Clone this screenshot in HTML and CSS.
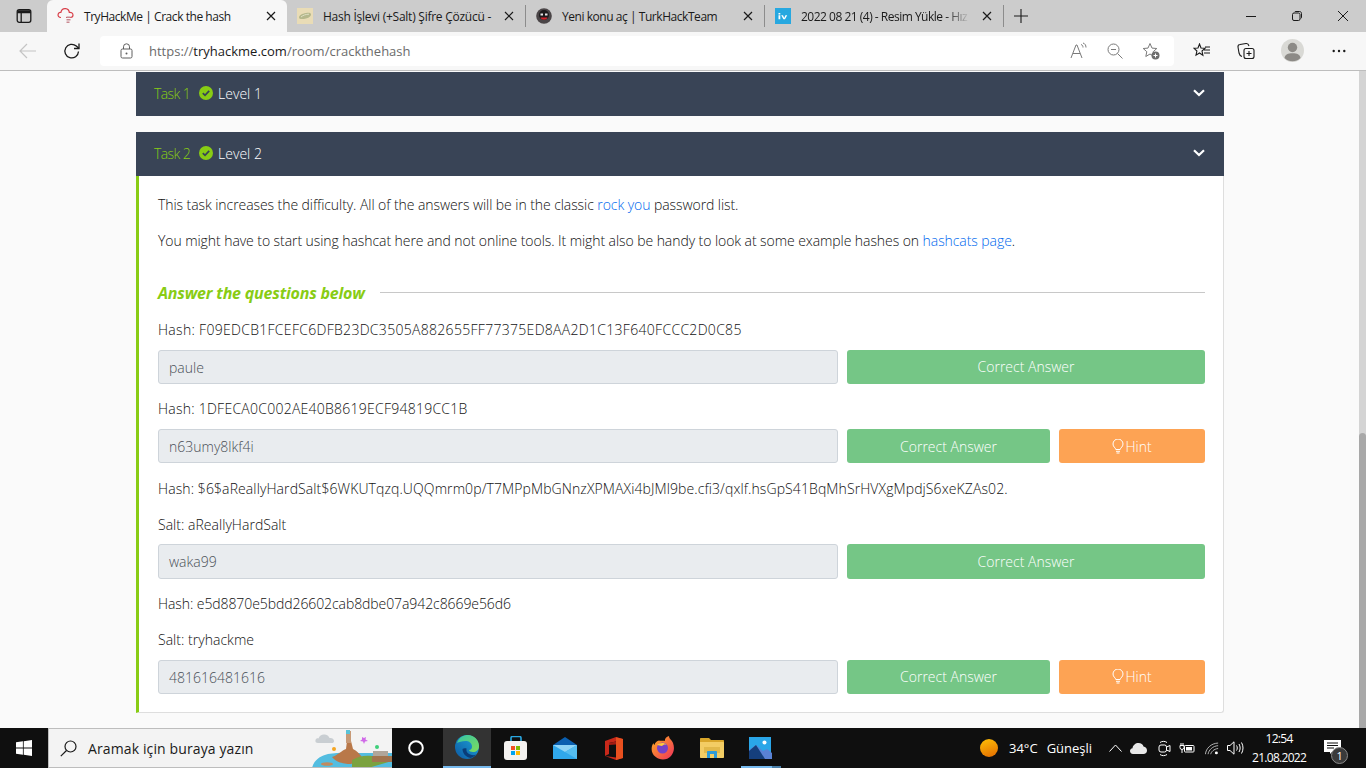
FILE: index.html
```html
<!DOCTYPE html>
<html lang="tr">
<head>
<meta charset="utf-8">
<title>TryHackMe | Crack the hash</title>
<link rel="stylesheet" href="styles.css">
</head>
<body>
<div class="screen">
  <header class="tabbar">
    <div class="tab-toggle">
      <svg width="16" height="16" viewBox="0 0 16 16" fill="none" stroke="#1a1a1a" stroke-width="1.3"><rect x="1.2" y="1.7" width="13.6" height="12.6" rx="2"/><path d="M1.2 4.6h13.6M5.2 4.6v9.7" /><path d="M1.6 2.2h12.8v2.2H1.6z" fill="#1a1a1a" stroke="none"/></svg>
    </div>
    <div class="tab tab-active">
      <svg class="favicon" width="18" height="18" viewBox="0 0 18 18" fill="none"><path d="M4 10.5C1.6 10.5.6 8.6 1.2 7c.5-1.3 1.7-1.8 2.7-1.6C4.500 3 6.400 1.400 8.600 1.700c2.200.3 3.500 1.900 3.700 3.700 1.500-.3 3.700.6 3.700 2.700 0 1.400-1 2.400-2.400 2.400H9" stroke="#d8404a" stroke-width="1.200"/><path d="M9.500 9.500h4v1.500h-4zM9.500 12h4v1.500h-4zM9.500 14.500h3V16h-3z" fill="#c98a92"/></svg>
      <span class="tab-title">TryHackMe | Crack the hash</span>
      <svg class="tab-close" width="10" height="10" viewBox="0 0 10 10" stroke="#1a1a1a" stroke-width="1.200"><path d="M1 1l8 8M9 1l-8 8"/></svg>
    </div>
    <div class="tab">
      <svg class="favicon" width="16" height="16" viewBox="0 0 16 16"><rect width="16" height="16" fill="#e9dcb6"/><path d="M2 9.500c0-2 3-4 7-4.500 2-.3 4.500-.5 5 1 .5 1.800-1.500 3.500-5 4.500-3 .8-7 1-7-1z" fill="#b5b88c"/><path d="M4 9c2-1.800 5-2.800 8-2.800" stroke="#dfe0c4" fill="none"/></svg>
      <span class="tab-title tab-title-wide">Hash İşlevi (+Salt) Şifre Çözücü -</span>
      <svg class="tab-close" width="10" height="10" viewBox="0 0 10 10" stroke="#1a1a1a" stroke-width="1.200"><path d="M1 1l8 8M9 1l-8 8"/></svg>
    </div>
    <div class="tab tab-sep">
      <svg class="favicon" width="16" height="16" viewBox="0 0 16 16"><circle cx="8" cy="8" r="7.800" fill="#4a4547"/><circle cx="8" cy="7" r="5" fill="#1d1b1c"/><path d="M4.500 5.500h2.500v2H4.500zM9 5.500h2.500v2H9z" fill="#e6e6e6"/><path d="M4.500 9.500c1 3 6 3 7 0z" fill="#d2232a"/></svg>
      <span class="tab-title">Yeni konu aç | TurkHackTeam</span>
      <svg class="tab-close" width="10" height="10" viewBox="0 0 10 10" stroke="#1a1a1a" stroke-width="1.200"><path d="M1 1l8 8M9 1l-8 8"/></svg>
    </div>
    <div class="tab tab-sep tab-last">
      <svg class="favicon" width="16" height="16" viewBox="0 0 16 16"><rect width="16" height="16" fill="#27a8e0"/><path d="M3.500 5h1.800v1.500H3.500zM3.500 7.300h1.800v4H3.500zM6.200 7.300h1.800l1.200 2.600 1.200-2.600h1.800l-2.200 4H8.400z" fill="#fff"/></svg>
      <span class="tab-title tab-fade">2022 08 21 (4) - Resim Yükle - Hız</span>
      <svg class="tab-close" width="10" height="10" viewBox="0 0 10 10" stroke="#1a1a1a" stroke-width="1.200"><path d="M1 1l8 8M9 1l-8 8"/></svg>
    </div>
    <div class="tab-new">
      <svg width="14" height="14" viewBox="0 0 14 14" stroke="#1a1a1a" stroke-width="1.100"><path d="M7 0v14M0 7h14"/></svg>
    </div>
    <div class="window-controls">
      <div class="win-btn"><svg width="10" height="10" viewBox="0 0 10 10" stroke="#1a1a1a"><path d="M0 5.500h10"/></svg></div>
      <div class="win-btn"><svg width="10" height="10" viewBox="0 0 10 10" fill="none" stroke="#1a1a1a"><rect x=".5" y="2" width="7.500" height="7.500" rx="1.500"/><path d="M2.500 1.200 3.200.5h4.300c1.200 0 2 .8 2 2v4.300l-.7.700"/></svg></div>
      <div class="win-btn"><svg width="10" height="10" viewBox="0 0 10 10" stroke="#1a1a1a"><path d="M0 0l10 10M10 0L0 10"/></svg></div>
    </div>
  </header>

  <nav class="toolbar">
    <div class="nav-btn nav-back"><svg width="18" height="16" viewBox="0 0 18 16" fill="none" stroke="#c4c4c4" stroke-width="1.200"><path d="M1 8h16M8 1 1 8l7 7"/></svg></div>
    <div class="nav-btn nav-reload"><svg width="18" height="18" viewBox="0 0 18 18" fill="none" stroke="#1a1a1a" stroke-width="1.300"><path d="M15.500 9.500a6.800 6.800 0 1 1-2.200-5.400L16 6.500"/><path d="M16 1.500v5h-5"/></svg></div>
    <div class="address">
      <svg class="lock" width="13" height="16" viewBox="0 0 13 16" fill="none" stroke="#5f5f5f"><rect x="1" y="6" width="11" height="9" rx="1.500"/><path d="M3.500 6V3.800a3 3 0 0 1 6 0V6"/><circle cx="6.500" cy="10.500" r="1" fill="#5f5f5f" stroke="none"/></svg>
      <span class="url">https://<b class="url-host">tryhackme.com</b>/room/crackthehash</span>
      <div class="address-icons">
        <svg width="18" height="18" viewBox="0 0 18 18" fill="none" stroke="#7a7a7a"><path d="M1 16 6 3h1l5 13M3 11.500h7"/><path d="M11 2.500c1.500.5 2 1.500 2 3M13 1c2 .6 3 2.300 3 4.500"/></svg>
        <svg width="16" height="16" viewBox="0 0 16 16" fill="none" stroke="#7a7a7a"><circle cx="6.500" cy="6.500" r="5.500"/><path d="M4 6.500h5M10.500 10.500l5 5"/></svg>
        <svg width="18" height="18" viewBox="0 0 18 18" fill="none"><path d="M8 1.500l2 4.600 4.800.4-3.600 3.200 1 4.800L8 12l-4.200 2.500 1-4.800L1.200 6.500 6 6.100z" stroke="#7a7a7a"/><circle cx="13.500" cy="13.500" r="4" fill="#6e6e6e"/><path d="M13.500 11.500v4M11.500 13.500h4" stroke="#fff"/></svg>
      </div>
    </div>
    <div class="tool-icons">
      <svg class="ti-fav" width="18" height="16" viewBox="0 0 18 16" fill="none" stroke="#1a1a1a" stroke-width="1.100"><path d="M6.500 1 8 5l4 .3-3 2.700.9 4.200L6.500 10l-3.500 2.200.9-4.200L1 5.300 5 5zM11 7h6M11 10h6M12 4h5"/></svg>
      <svg class="ti-col" width="18" height="18" viewBox="0 0 18 18" fill="none" stroke="#1a1a1a" stroke-width="1.100"><rect x="7" y="6.500" width="10" height="10" rx="2"/><path d="M12 9v5M9.500 11.500h5M5 14.500C3 14 2.500 13 2 11L1 5c-.2-1.500.5-2.300 2-2.500L9 1.500c1.500-.2 2.500.5 3 2.500"/></svg>
      <svg class="ti-avatar" width="23" height="23" viewBox="0 0 23 23"><circle cx="11.500" cy="11.500" r="11.500" fill="#d9d9d5"/><circle cx="11.500" cy="8.500" r="4.700" fill="#8c8a86"/><path d="M3.500 19c.5-3.500 3.500-4.800 8-4.800s7.500 1.300 8 4.800a11.500 11.500 0 0 1-16 0z" fill="#8c8a86"/></svg>
      <svg class="ti-more" width="14" height="4" viewBox="0 0 14 4" fill="#1a1a1a"><circle cx="1.700" cy="2" r="1.200"/><circle cx="7" cy="2" r="1.200"/><circle cx="12.300" cy="2" r="1.200"/></svg>
    </div>
  </nav>

  <div class="viewport">
    <main class="page">
      <section class="task task-first">
        <div class="task-head">
          <span class="task-no">Task 1</span>
          <svg class="check" width="14" height="14" viewBox="0 0 14 14"><circle cx="7" cy="7" r="7" fill="#88cc14"/><path d="M3.800 7.200 6 9.300l4.200-4.400" fill="none" stroke="#394456" stroke-width="1.800"/></svg>
          <span class="task-name">Level 1</span>
          <svg class="chev" width="12" height="8" viewBox="0 0 12 8" fill="none" stroke="#fff" stroke-width="2.200"><path d="M1 1.200 6 6l5-4.800"/></svg>
        </div>
      </section>
      <section class="task">
        <div class="task-head">
          <span class="task-no">Task 2</span>
          <svg class="check" width="14" height="14" viewBox="0 0 14 14"><circle cx="7" cy="7" r="7" fill="#88cc14"/><path d="M3.800 7.200 6 9.300l4.200-4.400" fill="none" stroke="#394456" stroke-width="1.800"/></svg>
          <span class="task-name">Level 2</span>
          <svg class="chev" width="12" height="8" viewBox="0 0 12 8" fill="none" stroke="#fff" stroke-width="2.200"><path d="M1 1.200 6 6l5-4.800"/></svg>
        </div>
        <div class="task-body">
          <p class="line">This task increases the difficulty. All of the answers will be in the classic <a href="#">rock you</a> password list.</p>
          <p class="line">You might have to start using hashcat here and not online tools. It might also be handy to look at some example hashes on <a href="#">hashcats page</a>.</p>
          <div class="answer-title"><h3>Answer the questions below</h3><span class="rule"></span></div>

          <p class="line q-end hash-sha">Hash: F09EDCB1FCEFC6DFB23DC3505A882655FF77375ED8AA2D1C13F640FCCC2D0C85</p>
          <div class="answer-row">
            <div class="field">paule</div>
            <div class="btn btn-ok">Correct Answer</div>
          </div>

          <p class="line q-end hash-md">Hash: 1DFECA0C002AE40B8619ECF94819CC1B</p>
          <div class="answer-row">
            <div class="field">n63umy8lkf4i</div>
            <div class="btn btn-ok">Correct Answer</div>
            <div class="btn btn-hint"><svg width="12" height="15" viewBox="0 0 12 15" fill="none" stroke="#fff"><path d="M3.800 10.500C3.500 8.500 1 8 1 5a5 5 0 0 1 10 0c0 3-2.500 3.500-2.800 5.500z"/><path d="M4 12.300h4M4.500 14h3"/></svg>Hint</div>
          </div>

          <p class="line hash-crypt">Hash: $6$aReallyHardSalt$6WKUTqzq.UQQmrm0p/T7MPpMbGNnzXPMAXi4bJMl9be.cfi3/qxlf.hsGpS41BqMhSrHVXgMpdjS6xeKZAs02.</p>
          <p class="line q-end hash-salt">Salt: aReallyHardSalt</p>
          <div class="answer-row">
            <div class="field">waka99</div>
            <div class="btn btn-ok">Correct Answer</div>
          </div>

          <p class="line hash-lower">Hash: e5d8870e5bdd26602cab8dbe07a942c8669e56d6</p>
          <p class="line q-end hash-salt">Salt: tryhackme</p>
          <div class="answer-row">
            <div class="field">481616481616</div>
            <div class="btn btn-ok">Correct Answer</div>
            <div class="btn btn-hint"><svg width="12" height="15" viewBox="0 0 12 15" fill="none" stroke="#fff"><path d="M3.800 10.500C3.500 8.500 1 8 1 5a5 5 0 0 1 10 0c0 3-2.500 3.500-2.800 5.500z"/><path d="M4 12.300h4M4.500 14h3"/></svg>Hint</div>
          </div>
        </div>
      </section>
    </main>
    <div class="scrollbar"><div class="thumb"></div></div>
  </div>

  <footer class="taskbar">
    <div class="start"><svg width="16" height="16" viewBox="0 0 16 16" fill="#fff"><path d="M0 2.300 6.900 1.300v6.300H0zM7.700 1.200 16 0v7.600H7.700zM0 8.400h6.900v6.300L0 13.700zM7.700 8.400H16V16l-8.300-1.200z"/></svg></div>
    <div class="search">
      <svg class="search-glass" width="17" height="17" viewBox="0 0 17 17" fill="none" stroke="#1a1a1a" stroke-width="1.200"><circle cx="10.500" cy="6.500" r="5.500"/><path d="M6.500 10.500.8 16.200"/></svg>
      <span class="search-text">Aramak için buraya yazın</span>
      <svg class="search-art" width="80" height="39" viewBox="0 0 80 39">
        <path d="M6 14c-2 0-3-1-2.500-3 .4-1.500 2-2 3-1.500C7.500 6.500 10 5 13 5.500c2.500.4 4 2 4.500 3.500 2-.5 4.500.5 4.500 3 0 1.500-1 2-2 2z" fill="#c9ced2"/>
        <circle cx="22" cy="20" r="2" fill="#f5a623"/><path d="M50 8l2 1 2-1-.5 2.500L56 12l-3 .5L52 15l-1-2.500-3-.5 2-1.500z" fill="#d06ae8"/><circle cx="65" cy="18" r="2" fill="#3ed07a"/>
        <path d="M0 39c2-8 8-12 16-14 10-2 30-1 40-1h24v15z" fill="#53bde0"/>
        <path d="M20 28c6-2 9-6 14-8l1-8h4l2 8c4 2 8 6 10 10l-12 5c-8 0-15-2-19-7z" fill="#b97849"/>
        <rect x="34" y="2" width="5" height="12" fill="#c79a77"/><rect x="34" y="1" width="4" height="4" fill="#5ac3d8"/>
        <path d="M40 31c6-4 14-5 20-4l20 1v4l-24 7H40z" fill="#7ba23f"/>
        <rect x="61" y="22" width="15" height="5" fill="#b0a69a"/><path d="M60 27h20v6H60z" fill="#a1744e"/>
        <ellipse cx="15" cy="35" rx="6" ry="1.800" fill="#c28a5e"/>
      </svg>
    </div>
    <div class="cortana"><svg width="16" height="16" viewBox="0 0 16 16" fill="none" stroke="#fff" stroke-width="2"><circle cx="8" cy="8" r="6.800"/></svg></div>
    <div class="task-app app-active">
      <svg width="24" height="24" viewBox="0 0 24 24"><defs><linearGradient id="e1" x1="0" y1="1" x2="1" y2="0"><stop offset="0" stop-color="#0c59a4"/><stop offset="1" stop-color="#1fa7d8"/></linearGradient><linearGradient id="e2" x1="0" y1="0" x2="1" y2="1"><stop offset="0" stop-color="#33c4a8"/><stop offset="1" stop-color="#7fdc5a"/></linearGradient></defs><circle cx="12" cy="12" r="12" fill="url(#e1)"/><path d="M2 8C4 2 9 0 13 0c6 0 11 5 11 11 0 4-3 6-6 6-2 0-4-1-4-2 2 0 3-1.500 3-3.500C17 8 14 6 10.500 6 7 6 4 7 2 8z" fill="url(#e2)"/><path d="M7.500 14c0 4 3 8 8 9 2-.5 4-1.500 5.500-3.500-2 1-5 .8-7-.5-2-1.300-3-3-2.500-5.500-2-.5-3 .000-4 .500z" fill="#0a3d78"/></svg>
    </div>
    <div class="task-app">
      <svg width="24" height="24" viewBox="0 0 24 24"><path d="M7 6V2c0-1 .5-1.500 1.500-1.500h7c1 0 1.500.5 1.500 1.500v4" fill="none" stroke="#2aa7e0" stroke-width="1.600"/><rect y="5" width="23" height="19" rx="3" fill="#f4f2f0"/><path d="M7 10h4v4H7z" fill="#f25022"/><path d="M12 10h4v4h-4z" fill="#7fba00"/><path d="M7 15h4v4H7z" fill="#00a4ef"/><path d="M12 15h4v4h-4z" fill="#ffb900"/></svg>
    </div>
    <div class="task-app">
      <svg width="24" height="22" viewBox="0 0 24 22"><path d="M0 8 12 0l12 8z" fill="#0a5fb0"/><rect y="8" width="24" height="14" fill="#30a8ec"/><path d="M0 8l12 7 12-7z" fill="#8fd4f6"/><path d="M12 15 24 8v14z" fill="#55bdf0"/></svg>
    </div>
    <div class="task-app">
      <svg width="18" height="23" viewBox="0 0 18 23"><path d="M0 4 11 0l7 2v19l-7 2-11-4 11 1.500V4.500L4 6v11l-4 2z" fill="#c8281a"/><path d="M11 .3 18 2v19l-7 2z" fill="#e8501f"/><path d="M4 6l7-1.500v3L4 8z" fill="#a51c12"/></svg>
    </div>
    <div class="task-app">
      <svg width="24" height="24" viewBox="0 0 24 24"><defs><linearGradient id="f1" x1="0" y1="0" x2="1" y2="1"><stop offset="0" stop-color="#ffb01e"/><stop offset="1" stop-color="#ef2f5e"/></linearGradient></defs><path d="M22 7c1.500 4 1.500 9-2 13-4 4.500-11 4.700-15.500.8C1 18 0 14 1 10c.3-1 .8-2 1.500-3 0 1 .5 1.500 1 2C4 6.500 6 5 8 4.500 10 5.500 12 4 14 5c-.5-2 1-4 4-5 0 3 3 4 4 7z" fill="url(#f1)"/><circle cx="11.500" cy="12" r="5.500" fill="#7542c7"/><path d="M6 9c2-2 7-3 10 0-2-1-4 0-5 1-2 0-3-1-5-1z" fill="#ffc93a"/></svg>
    </div>
    <div class="task-app">
      <svg width="24" height="20" viewBox="0 0 24 20"><path d="M0 1c0-.6.4-1 1-1h8l2 2h12c.6 0 1 .4 1 1v2H0z" fill="#d9a62a"/><path d="M0 4h23c.6 0 1 .4 1 1v14c0 .6-.4 1-1 1H1c-.6 0-1-.4-1-1z" fill="#f3cd64"/><path d="M4 15V9h16v6" fill="#e2b94a"/><path d="M7 20v-6c0-.6.4-1 1-1h8c.6 0 1 .4 1 1v6h-3v-4h-4v4z" fill="#2e9bd6"/></svg>
    </div>
    <div class="task-app app-open">
      <svg width="23" height="22" viewBox="0 0 23 22"><rect width="22" height="22" fill="#2aa6e8"/><path d="M0 22V13l7-5 7 6 4-2 5 4v6z" fill="#5a82d4"/><path d="M0 22v-8l7-6 9 14z" fill="#153f7c"/><circle cx="15.500" cy="5.500" r="2" fill="#fff"/></svg>
    </div>
    <div class="tray">
      <span class="sun"></span>
      <span class="temp">34°C</span>
      <span class="weather">Güneşli</span>
      <svg class="t-chev" width="13" height="8" viewBox="0 0 13 8" fill="none" stroke="#fff"><path d="M.5 7.500 6.500 1l6 6.500"/></svg>
      <svg class="t-cloud" width="17" height="11" viewBox="0 0 17 11" fill="#e8e8e8"><path d="M3 11C1 11 0 9.500 0 8c0-1.500 1-2.500 2.500-2.800C3 2 5.500 0 8.500 0c2.500 0 4.500 1.500 5 3.500 2 .3 3.500 2 3.500 4s-1.500 3.500-3.500 3.500z"/></svg>
      <svg class="t-meet" width="13" height="17" viewBox="0 0 13 17" fill="none" stroke="#fff"><rect x="1" y="5" width="7.500" height="7" rx="2"/><path d="M8.500 7l3.500-1.500v6L8.500 10M2 2.500c2-1.500 5-1.500 7 0M2 14.500c2 1.500 5 1.500 7 0"/></svg>
      <svg class="t-batt" width="16" height="12" viewBox="0 0 16 12" fill="none" stroke="#fff"><rect x="5.500" y="3.500" width="9.500" height="6.500" rx=".8"/><rect x="7" y="5" width="6" height="3.500" fill="#fff" stroke="none"/><path d="M1 3.500h4v2a2 2 0 0 1-4 0zM2 1v2.500M4 1v2.500M3 7.500V11"/></svg>
      <svg class="t-wifi" width="14" height="13" viewBox="0 0 16 14" fill="none" stroke="#c8c8c8"><path d="M.5 13.500C1 7 7 1 15 .8M3.500 13.500C4 9 9 4 15 3.800M6.500 13.500C7 11 10 7.500 15 7"/><circle cx="13" cy="12" r="1.700" fill="#fff" stroke="none"/></svg>
      <svg class="t-vol" width="17" height="14" viewBox="0 0 17 14" fill="none" stroke="#fff"><path d="M.5 4.500h2.500L7 .8v12.400L3 9.500H.5zM9.500 4.500c1 1.500 1 3.500 0 5M12 3c1.500 2.500 1.500 5.500 0 8M14.500 1.500c2 3.500 2 7.500 0 11"/></svg>
      <div class="clock"><span>12:54</span><span>21.08.2022</span></div>
      <div class="notif">
        <svg width="17" height="14" viewBox="0 0 17 14" fill="#fff"><path d="M0 0h17v12H8l-2 2v-2H0z"/><path d="M3 3h11M3 5.500h11M3 8h7" stroke="#0f0f0f"/></svg>
        <span class="badge">1</span>
      </div>
    </div>
  </footer>
</div>
</body>
</html>
```
FILE: styles.css
```css
* { box-sizing: border-box; }
html, body { margin: 0; padding: 0; height: 100%; }
body { font-family: "Open Sans", "Liberation Sans", sans-serif; overflow: hidden; }
.screen { width: 1366px; height: 768px; display: flex; flex-direction: column; overflow: hidden; }

/* browser tabs */
.tabbar { height: 32px; background: #cccccc; display: flex; align-items: stretch; flex: none; font-size: 12px; color: #1a1a1a; }
.tab-toggle { width: 47px; display: flex; align-items: center; justify-content: center; }
.tab { width: 239px; display: flex; align-items: center; padding: 0 12px 0 10px; gap: 10px; position: relative; }
.tab-active { width: 240px; background: #f7f7f7; border-radius: 6px 6px 0 0; padding-right: 11px; gap: 9px; }
.tab-sep::before { content: ""; position: absolute; left: -1px; top: 5px; bottom: 5px; width: 1px; background: #8c8c8c; }
.tab-last::after { content: ""; position: absolute; right: 0; top: 5px; bottom: 5px; width: 1px; background: #8c8c8c; }
.favicon { flex: none; }
.tab-title { flex: 1; white-space: nowrap; letter-spacing: -0.45px; }
.tab-title-wide { letter-spacing: -0.25px; }
.tab-fade { letter-spacing: -0.5px; -webkit-mask-image: linear-gradient(to right, #000 86%, transparent 100%); mask-image: linear-gradient(to right, #000 86%, transparent 100%); }
.tab-close { flex: none; margin-left: 2px; }
.tab-new { width: 34px; display: flex; align-items: center; justify-content: center; }
.window-controls { margin-left: auto; display: flex; }
.win-btn { width: 46px; display: flex; align-items: center; justify-content: center; }

/* browser toolbar */
.toolbar { height: 39px; background: #f7f7f7; border-bottom: 1px solid #bdbdbd; display: flex; align-items: center; flex: none; padding-bottom: 1px; }
.nav-btn { display: flex; align-items: center; justify-content: center; }
.nav-back { width: 56px; }
.nav-reload { width: 32px; margin-right: 12px; }
.address { width: 1074px; height: 30px; background: #fff; border-radius: 4px; display: flex; align-items: center; padding-left: 20px; }
.lock { flex: none; }
.url { margin-left: 16px; font-size: 13px; color: #6b6b6b; }
.url-host { font-weight: 400; color: #1a1a1a; }
.address-icons { margin-left: auto; display: flex; align-items: center; gap: 19px; padding-right: 14px; }
.tool-icons { flex: 1; display: flex; align-items: center; padding-left: 19px; }
.ti-col { margin-left: 26px; }
.ti-avatar { margin-left: 26px; }
.ti-more { margin-left: 28px; }

/* page */
.viewport { flex: 1; min-height: 0; display: flex; background: #fafafa; }
.page { flex: 1; padding: 1px 0 0 136px; min-width: 0; font-family: "Open Sans", "Liberation Sans", sans-serif; font-weight: 300; font-size: 14px; line-height: 21px; color: #111111; }
.scrollbar { width: 7px; background: #d4d4d4; flex: none; display: flex; flex-direction: column; }
.thumb { margin-top: 362px; flex: 1; background: #a8a8a8; border-radius: 4px 4px 0 0; }
.task { width: 1088px; margin-bottom: 16px; }
.task-head { height: 44px; background: #394456; display: flex; align-items: center; padding: 0 19px 2px 18px; color: #fff; }
.task-no { color: #88cc14; letter-spacing: -0.6px; }
.check { margin: 0 5px 0 9px; }
.chev { margin-left: auto; }
.task-body { height: 537px; background: #fff; border-left: 3px solid #88cc14; border-right: 1px solid #dedede; border-bottom: 1px solid #dedede; border-radius: 0 0 3px 0; padding: 18px 18px 0 19px; }
.line { margin: 0 0 15px; letter-spacing: -0.07px; }
.line a { color: #0069ee; text-decoration: none; }
.q-end { margin-bottom: 9.6px; }
.hash-sha { letter-spacing: 0.3px; }
.hash-md { letter-spacing: 0.25px; }
.hash-crypt { letter-spacing: 0.1px; }
.hash-lower { letter-spacing: -0.08px; }
.hash-salt { letter-spacing: 0.03px; }
.answer-title { display: flex; align-items: center; margin: 32px 0 16.1px; height: 20px; }
.answer-title h3 { margin: 0; font-size: 16px; font-weight: 700; font-style: italic; color: #88cc14; line-height: 20px; white-space: nowrap; letter-spacing: -0.2px; }
.rule { flex: 1; height: 1px; background: #c8c8c8; margin: 0 0 2px 15px; }
.answer-row { display: flex; gap: 9px; height: 34.3px; margin-bottom: 14.4px; }
.field { width: 680px; flex: none; background: #e9ecef; border: 1px solid #ced4da; border-radius: 3px; color: #495057; padding: 1px 10px 0; display: flex; align-items: center; }
.btn { border-radius: 3px; color: #fff; display: flex; align-items: center; justify-content: center; gap: 1px; }
.btn-ok { flex: 1; background: #75c686; }
.btn-hint { width: 146px; flex: none; background: #fda354; }

/* taskbar */
.taskbar { height: 40px; background: #0f0f0f; flex: none; display: flex; align-items: stretch; color: #fff; font-size: 13px; }
.start { width: 48px; display: flex; align-items: center; justify-content: center; }
.search { width: 344px; background: #f3f3f3; border: 1px solid #bdbdbd; border-right: 0; display: flex; align-items: center; padding-left: 11px; position: relative; color: #1a1a1a; overflow: hidden; }
.search-text { margin-left: 11px; font-size: 14px; white-space: nowrap; letter-spacing: 0.12px; }
.search-art { position: absolute; right: 0; top: 0; }
.cortana { width: 51px; padding-right: 3px; display: flex; align-items: center; justify-content: center; }
.task-app { width: 49px; display: flex; align-items: center; justify-content: center; position: relative; flex: none; }
.app-active { width: 48px; background: #333333; border-bottom: 2px solid #76b9ed; }
.app-open::after { content: ""; position: absolute; left: 5px; right: 4px; bottom: 0; height: 2px; background: linear-gradient(to right, #76b9ed 77%, #4a7fa8 77%); }
.tray { flex: 1; display: flex; align-items: center; padding-left: 195px; position: relative; }
.sun { width: 18px; height: 18px; border-radius: 50%; background: linear-gradient(160deg, #ffc107, #e26a00); flex: none; }
.temp { margin-left: 11px; }
.weather { margin-left: 9px; }
.t-chev { margin-left: 17px; }
.t-cloud { margin-left: 8px; }
.t-meet { margin-left: 11px; }
.t-batt { margin-left: 8px; }
.t-wifi { margin-left: 10px; }
.t-vol { margin-left: 8px; }
.clock { width: 70px; display: flex; flex-direction: column; align-items: center; font-size: 12px; line-height: 19px; letter-spacing: -0.7px; }
.notif { margin-left: 10px; position: relative; display: flex; margin-top: -3px; }
.badge { position: absolute; right: -7px; bottom: -10px; width: 17px; height: 17px; border-radius: 50%; border: 1px solid #8a8a8a; background: #3a3a3a; font-size: 11px; line-height: 15px; text-align: center; letter-spacing: 0; }
```
